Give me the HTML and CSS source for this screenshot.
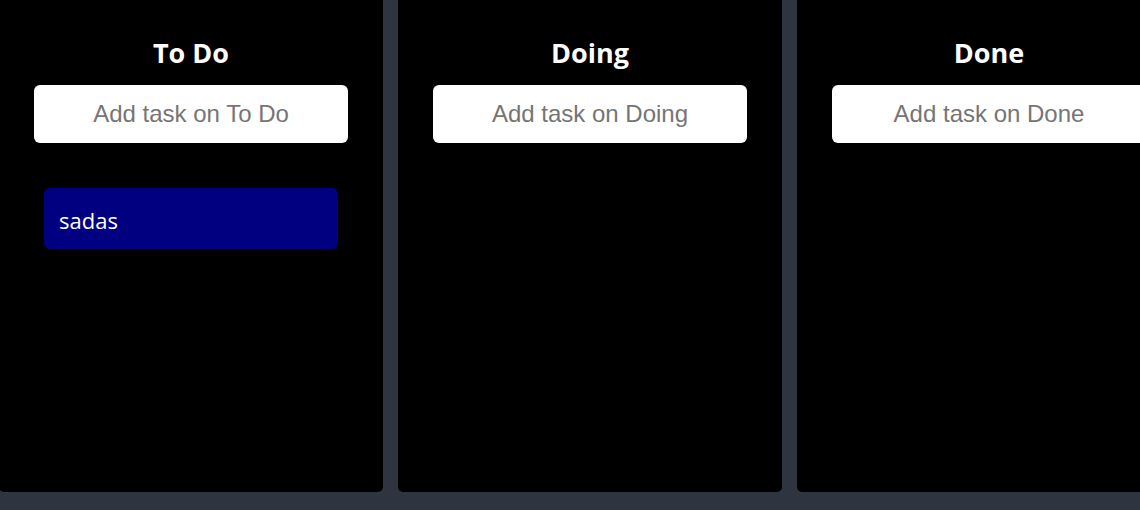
FILE: index.html
```html
<!DOCTYPE html>
<html>
<head>
<meta charset="utf-8">
<link rel="stylesheet" href="styles.css">
</head>
<body>
<div class="board">
  <section class="column">
    <h2 class="column-title">To Do</h2>
    <input class="task-input" type="text" placeholder="Add task on To Do">
    <div class="task-list">
      <div class="task">sadas</div>
    </div>
  </section>
  <section class="column">
    <h2 class="column-title">Doing</h2>
    <input class="task-input" type="text" placeholder="Add task on Doing">
    <div class="task-list"></div>
  </section>
  <section class="column">
    <h2 class="column-title">Done</h2>
    <input class="task-input" type="text" placeholder="Add task on Done">
    <div class="task-list"></div>
  </section>
</div>
</body>
</html>
```
FILE: styles.css
```css
html, body {
  margin: 0;
  padding: 0;
  background: #2e3440;
  overflow: hidden;
}
.board {
  display: flex;
  gap: 15px;
  margin-left: -1px;
  margin-top: -10px;
}
.column {
  flex: 0 0 384px;
  height: 502px;
  background: #000;
  border-radius: 5px;
  display: flex;
  flex-direction: column;
  align-items: center;
  box-sizing: border-box;
  padding-top: 47px;
}
.column-title {
  margin: 0;
  color: #fff;
  font-family: "Open Sans", sans-serif;
  font-weight: 700;
  font-size: 27px;
  line-height: 32px;
  height: 32px;
}
.task-input {
  margin-top: 16px;
  width: 314px;
  height: 58px;
  box-sizing: border-box;
  border: none;
  border-radius: 6px;
  background: #fff;
  font-family: "Liberation Sans", Arial, sans-serif;
  font-size: 24px;
  text-align: center;
  outline: none;
  padding: 0 10px;
}
.task-input::placeholder {
  color: #757575;
}
.task-list {
  margin-top: 45px;
  width: 294px;
  display: flex;
  flex-direction: column;
}
.task {
  background: #000080;
  color: #fff;
  border-radius: 6px;
  height: 61px;
  box-sizing: border-box;
  padding: 2px 15px 0;
  display: flex;
  align-items: center;
  font-family: "Open Sans", sans-serif;
  font-size: 22px;
}
```
